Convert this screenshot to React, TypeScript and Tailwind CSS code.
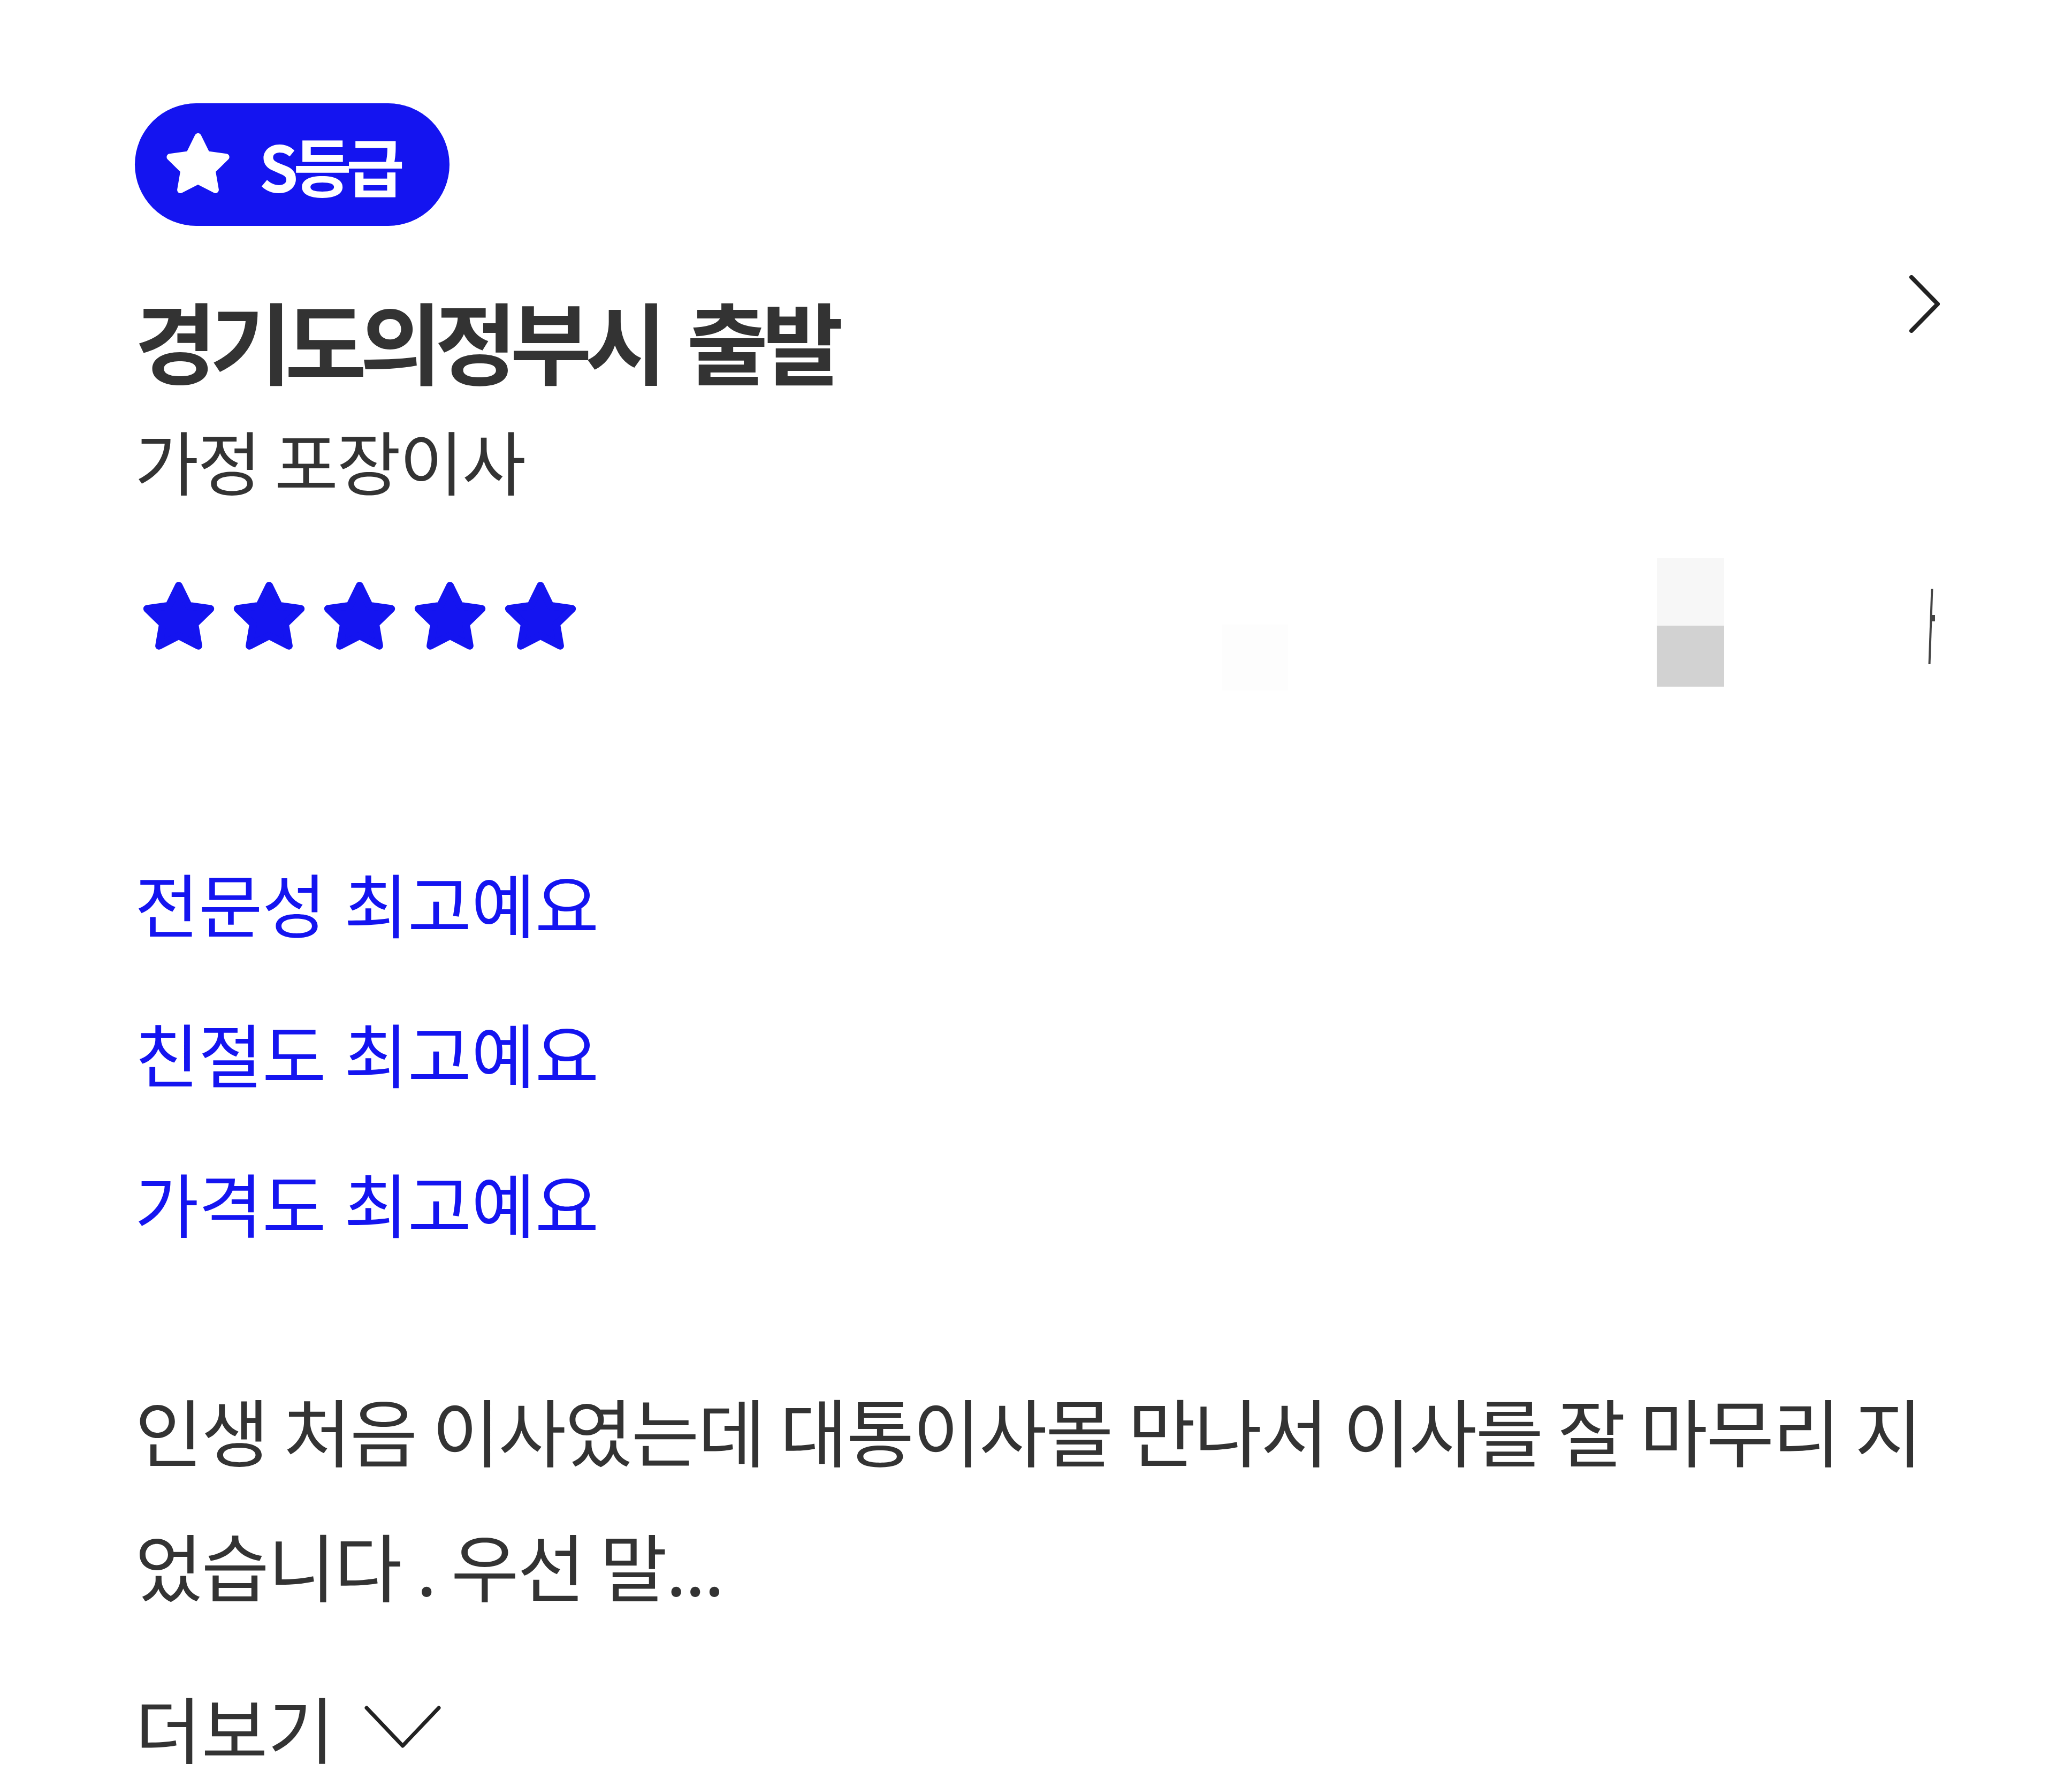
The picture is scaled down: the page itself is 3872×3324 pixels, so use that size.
import { ReactNode } from 'react';

const BLUE = '#1414f0';

const StarShape = ({ className, color }: { className: string; color: string }) => (
  <svg viewBox="1 1 22 22" className={className}>
    <polygon
      points="12,2.6 14.9,8.5 21.3,9.4 16.7,13.9 17.8,20.3 12,17.3 6.2,20.3 7.3,13.9 2.7,9.4 9.1,8.5"
      fill={color}
      stroke={color}
      strokeWidth={2.2}
      strokeLinejoin="round"
    />
  </svg>
);

const Keyword = ({ label, children }: { label: string; children: ReactNode }) => (
  <div className="flex items-center gap-[34px] h-[280px] text-[130px] leading-[280px] tracking-[-0.005em] text-[#1414f0]">
    <span>{label}</span>
    <span>{children}</span>
  </div>
);

export default function App() {
  return (
    <div className="min-h-[3324px] w-full bg-white font-['Noto_Sans_CJK_KR','Noto_Sans',sans-serif] text-[#333333]">
      <div className="flex flex-col pl-[252px] pr-[247px]">
        {/* grade badge */}
        <div className="mt-[193px] flex h-[229px] w-[588px] items-center rounded-full bg-[#1414f0] pl-[56px]">
          <StarShape className="h-[124px] w-[124px]" color="#ffffff" />
          <span className="ml-[52px] text-[118px] font-bold leading-none tracking-[-0.08em] text-white">S등급</span>
        </div>

        {/* title row */}
        <div className="mt-[92px] flex items-start justify-between">
          <div className="pt-[20px] text-[166px] font-bold leading-[200px] tracking-[-0.075em] [word-spacing:24px] text-[#333333]">
            경기도의정부시 출발
          </div>
          <svg viewBox="0 0 57 108" className="h-[108px] w-[57px]">
            <path d="M4 4 L53 54 L4 104" fill="none" stroke="#222222" strokeWidth={8} strokeLinecap="round" strokeLinejoin="round" />
          </svg>
        </div>

        <div className="mt-[44px] text-[130px] leading-[160px] tracking-[-0.02em] text-[#333333]">가정 포장이사</div>

        {/* rating */}
        <div className="relative mt-[146px] flex h-[140px] items-center gap-[29px] pl-[12px]">
          {[0, 1, 2, 3, 4].map((i) => (
            <StarShape key={i} className="h-[140px] w-[140px]" color={BLUE} />
          ))}
          <div className="absolute left-[2032px] top-[83px] h-[123px] w-[123px] bg-[#fdfdfd]" />
          <div className="absolute left-[2844px] top-[-41px] h-[126px] w-[126px] bg-[#f7f7f7]" />
          <div className="absolute left-[2844px] top-[85px] h-[114px] w-[126px] bg-[#d2d2d2]" />
          <div className="absolute left-[3354px] top-[16px] h-[141px] w-[4px] rotate-[2deg] bg-[#444444]" />
          <div className="absolute left-[3358px] top-[65px] h-[12px] w-[6px] bg-[#444444]" />
        </div>

        {/* keywords */}
        <div className="mt-[321px] flex flex-col">
          <Keyword label="전문성">최고예요</Keyword>
          <Keyword label="친절도">최고예요</Keyword>
          <Keyword label="가격도">최고예요</Keyword>
        </div>

        {/* review body */}
        <div className="mt-[159px] text-[138px] leading-[252px] tracking-[-0.02em] [word-spacing:1px] text-[#333333]">
          <div className="whitespace-nowrap">인생 처음 이사였는데 대통이사몰 만나서 이사를 잘 마무리 지</div>
          <div className="whitespace-nowrap">었습니다 . 우선 말...</div>
        </div>

        <div className="mt-[98px] flex h-[160px] items-center gap-[56px] text-[135px] leading-[160px] tracking-[0em] text-[#333333]">
          <span>더보기</span>
          <svg viewBox="0 0 143 79" className="h-[79px] w-[143px]">
            <path d="M4 4 L71.5 75 L139 4" fill="none" stroke="#222222" strokeWidth={7} strokeLinecap="round" strokeLinejoin="round" />
          </svg>
        </div>
      </div>
    </div>
  );
}
